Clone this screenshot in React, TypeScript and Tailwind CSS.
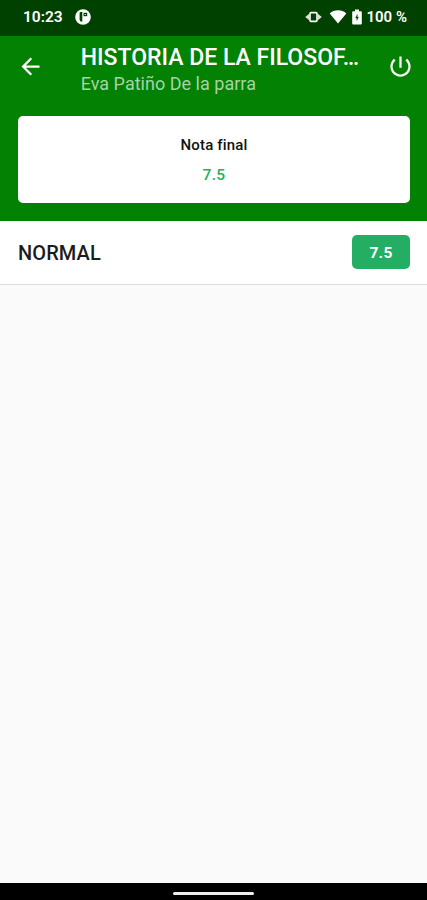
import { ReactNode } from "react";

const subject = {
    title: "HISTORIA DE LA FILOSOF…",
    student: "Eva Patiño De la parra",
    finalGrade: "7.5",
};

const evaluations = [{ name: "NORMAL", grade: "7.5" }];

function StatusBar() {
    return (
        <div className="h-9 shrink-0 bg-[#004100] flex items-center justify-between pl-[23px] pr-5 pb-[3px] text-white">
            <div className="flex items-center gap-3">
                <span className="text-[15.5px] leading-none font-semibold pt-[2px]">10:23</span>
                <svg className="size-4" viewBox="0 0 16 16">
                    <circle cx="8" cy="8" r="7.8" fill="#fff" />
                    <path d="M4.6 4.2q0-1.2 1.2-1.2h1.5v9.8q-2.700 0-2.700-2z" fill="#004100" />
                    <path d="M8.5 3.8h3.7v3.4H8.5z" fill="#004100" />
                    <path d="M9.6 4.9h1.2v1H9.6z" fill="#fff" />
                </svg>
            </div>

            <div className="flex items-center">
                {/* Vibración */}
                <svg className="w-[17px] h-3.5" viewBox="0 0 17 14">
                    <rect x="5" y="2.600" width="7" height="8.800" rx="1" fill="none" stroke="#fff" strokeWidth="1.6" />
                    <path d="M4.200 3.800v6.400L.2 7zM12.800 3.800v6.400l4-3.200z" fill="#fff" opacity=".85" />
                </svg>
                <svg className="w-[18px] h-[15px] ml-[7px]" viewBox="0 0 18 15">
                    <path d="M9 14.4.7 4.4C2.8 2.2 5.9 1.2 9 1.2s6.2 1 8.3 3.2z" fill="#fff" />
                </svg>
                {/* Batería cargando */}
                <svg className="w-2.5 h-4 ml-[5px]" viewBox="0 0 10 16">
                    <path d="M3 .6h4v1.6h1.900q.9 0 .9.9v11.400q0 .9-.9.9H1.100q-.9 0-.9-.9V3.100q0-.9.9-.9H3z" fill="#fff" />
                    <path d="M5.3 5.500 3.500 9h1.300v2.500L6.500 8H5.300z" fill="#004100" stroke="#004100" strokeWidth=".3" />
                </svg>
                <span className="text-[15px] leading-none font-semibold ml-1 pt-[2px] whitespace-nowrap">100 %</span>
            </div>
        </div>
    );
}

function IconButton({ label, children }: { label: string; children: ReactNode }) {
    return (
        <button aria-label={label} className="size-[27px] shrink-0 mt-[17px]">
            <svg className="size-full" viewBox="0 0 24 24" fill="#fff">
                {children}
            </svg>
        </button>
    );
}

function Header() {
    return (
        <header className="h-[184.5px] shrink-0 bg-[#028102] pl-[18px] pr-[17px]">
            <div className="h-[79.5px] flex items-start -ml-px -mr-1">
                <IconButton label="Volver">
                    <path d="M20 11H7.83l5.59-5.59L12 4l-8 8 8 8 1.41-1.41L7.83 13H20z" />
                </IconButton>

                <div className="flex-1 min-w-0 ml-[36.7px] pt-2 whitespace-nowrap">
                    <h1 className="text-[23px] leading-[27px] font-medium text-white">{subject.title}</h1>
                    <h2 className="text-[18px] leading-[26px] tracking-[0.02px] text-[#a5d4a5]">{subject.student}</h2>
                </div>

                <IconButton label="Salir">
                    <path d="M13 3h-2v10h2zM17.83 5.17l-1.42 1.42C17.99 7.86 19 9.81 19 12c0 3.87-3.13 7-7 7s-7-3.13-7-7c0-2.19 1.01-4.14 2.58-5.42L6.17 5.17C4.23 6.82 3 9.26 3 12c0 4.97 4.03 9 9 9s9-4.03 9-9c0-2.74-1.23-5.18-3.17-6.83z" />
                </IconButton>
            </div>

            <div className="h-[87.5px] rounded-[5px] bg-white flex flex-col items-center pt-[19px]">
                <span className="text-[15px] leading-5 font-medium tracking-[0.15px] text-[#111]">Nota final</span>
                <span className="text-[15.5px] leading-5 mt-2.5 font-medium tracking-[0.4px] text-[#27ae60]">{subject.finalGrade}</span>
            </div>
        </header>
    );
}

export default function App() {
    return (
        <div className="w-full h-[900px] flex flex-col overflow-hidden bg-[#fafafa] font-[Roboto,sans-serif]">
            <StatusBar />
            <Header />

            <main className="flex-1">
                {evaluations.map((item) => (
                    <div key={item.name} className="h-[64.5px] bg-white border-b border-[#dcdcdc] flex items-center justify-between pl-[18px] pr-[17px]">
                        <span className="text-[20px] font-medium tracking-[0.1px] text-[#1c1c1c] pt-px">{item.name}</span>
                        <span className="w-[58px] h-[34px] rounded-[5px] bg-[#24ae63] text-white text-[15.5px] font-bold tracking-[0.3px] flex items-center justify-center pt-0.5">
                            {item.grade}
                        </span>
                    </div>
                ))}
            </main>

            <div className="h-[17px] shrink-0 bg-black flex justify-center pt-[8.5px]">
                <div className="w-[81px] h-[3px] rounded-full bg-[#eee]" />
            </div>
        </div>
    );
}
